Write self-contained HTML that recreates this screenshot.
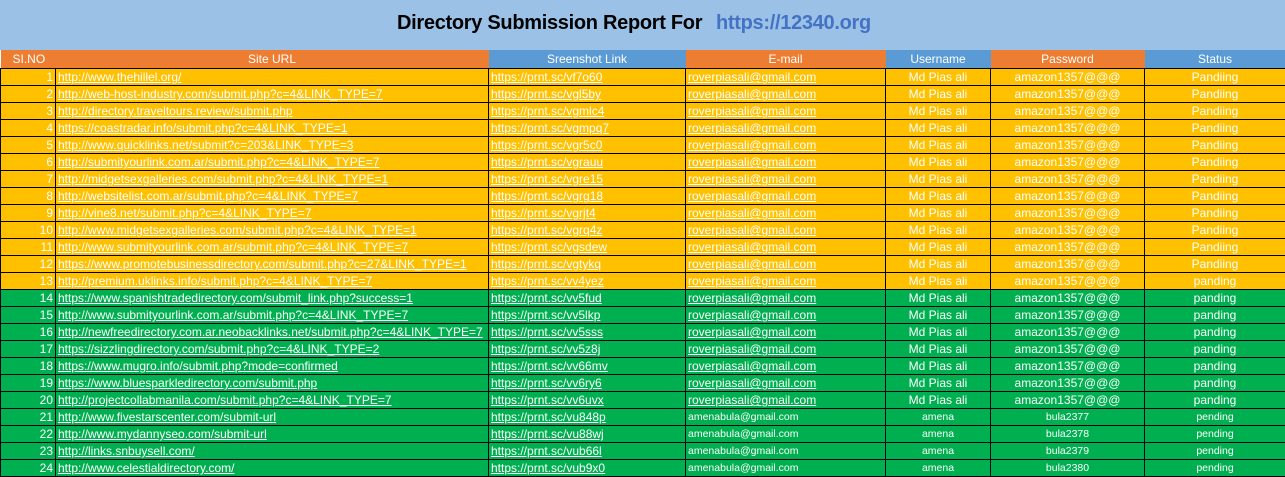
<!DOCTYPE html>
<html><head><meta charset="utf-8"><style>
body{margin:0;width:1285px;height:477px;overflow:hidden;background:#fff;font-family:"Liberation Sans",sans-serif}
.title{position:absolute;left:0;top:0;width:1285px;height:50px;background:#9bc2e6}
.title span{position:absolute;top:12px;font-weight:bold;font-size:20px;letter-spacing:-0.3px;white-space:nowrap}
table{position:absolute;left:0;top:50px;border-collapse:collapse;table-layout:fixed;width:1285px}
td{height:16px;padding:0 2px;font-size:12px;color:#fff;white-space:nowrap;overflow:hidden;border:1px solid #000;line-height:16px}
tr.h td{border:none;height:18px;text-align:center;font-size:12px;text-decoration:none!important}
.o{background:#ed7d31}.b{background:#5b9bd5}
tr.y td{background:#ffc000}tr.g td{background:#00b050}
td:nth-child(1){text-align:right}
td:nth-child(2),td:nth-child(3),tr.u td:nth-child(4){text-decoration:underline}
td:nth-child(5),td:nth-child(6),td:nth-child(7){text-align:center}
tr.a td:nth-child(4),tr.a td:nth-child(5),tr.a td:nth-child(6),tr.a td:nth-child(7){font-size:10.5px}
tr.h td:nth-child(1){text-align:left;padding-left:12px}
</style></head><body>
<div class="title"><span style="left:397px;color:#000">Directory Submission Report For</span><span style="left:716px;color:#4472c4">https://12340.org</span></div>
<table>
<colgroup><col style="width:55px"><col style="width:433px"><col style="width:197px"><col style="width:200px"><col style="width:105px"><col style="width:154px"><col style="width:141px"></colgroup>
<tr class="h"><td class="o">SI.NO</td><td class="o">Site URL</td><td class="b">Sreenshot Link</td><td class="o">E-mail</td><td class="b">Username</td><td class="o">Password</td><td class="b">Status</td></tr>
<tr class="y u"><td>1</td><td>http://www.thehillel.org/</td><td>https://prnt.sc/vf7o60</td><td>roverpiasali@gmail.com</td><td>Md Pias ali</td><td>amazon1357@@@</td><td>Pandiing</td></tr>
<tr class="y u"><td>2</td><td>http://web-host-industry.com/submit.php?c=4&amp;LINK_TYPE=7</td><td>https://prnt.sc/vgl5by</td><td>roverpiasali@gmail.com</td><td>Md Pias ali</td><td>amazon1357@@@</td><td>Pandiing</td></tr>
<tr class="y u"><td>3</td><td>http://directory.traveltours.review/submit.php</td><td>https://prnt.sc/vgmlc4</td><td>roverpiasali@gmail.com</td><td>Md Pias ali</td><td>amazon1357@@@</td><td>Pandiing</td></tr>
<tr class="y u"><td>4</td><td>https://coastradar.info/submit.php?c=4&amp;LINK_TYPE=1</td><td>https://prnt.sc/vgmpq7</td><td>roverpiasali@gmail.com</td><td>Md Pias ali</td><td>amazon1357@@@</td><td>Pandiing</td></tr>
<tr class="y u"><td>5</td><td>http://www.quicklinks.net/submit?c=203&amp;LINK_TYPE=3</td><td>https://prnt.sc/vgr5c0</td><td>roverpiasali@gmail.com</td><td>Md Pias ali</td><td>amazon1357@@@</td><td>Pandiing</td></tr>
<tr class="y u"><td>6</td><td>http://submityourlink.com.ar/submit.php?c=4&amp;LINK_TYPE=7</td><td>https://prnt.sc/vgrauu</td><td>roverpiasali@gmail.com</td><td>Md Pias ali</td><td>amazon1357@@@</td><td>Pandiing</td></tr>
<tr class="y u"><td>7</td><td>http://midgetsexgalleries.com/submit.php?c=4&amp;LINK_TYPE=1</td><td>https://prnt.sc/vgre15</td><td>roverpiasali@gmail.com</td><td>Md Pias ali</td><td>amazon1357@@@</td><td>Pandiing</td></tr>
<tr class="y u"><td>8</td><td>http://websitelist.com.ar/submit.php?c=4&amp;LINK_TYPE=7</td><td>https://prnt.sc/vgrg18</td><td>roverpiasali@gmail.com</td><td>Md Pias ali</td><td>amazon1357@@@</td><td>Pandiing</td></tr>
<tr class="y u"><td>9</td><td>http://vine8.net/submit.php?c=4&amp;LINK_TYPE=7</td><td>https://prnt.sc/vgrjt4</td><td>roverpiasali@gmail.com</td><td>Md Pias ali</td><td>amazon1357@@@</td><td>Pandiing</td></tr>
<tr class="y u"><td>10</td><td>http://www.midgetsexgalleries.com/submit.php?c=4&amp;LINK_TYPE=1</td><td>https://prnt.sc/vgrq4z</td><td>roverpiasali@gmail.com</td><td>Md Pias ali</td><td>amazon1357@@@</td><td>Pandiing</td></tr>
<tr class="y u"><td>11</td><td>http://www.submityourlink.com.ar/submit.php?c=4&amp;LINK_TYPE=7</td><td>https://prnt.sc/vgsdew</td><td>roverpiasali@gmail.com</td><td>Md Pias ali</td><td>amazon1357@@@</td><td>Pandiing</td></tr>
<tr class="y u"><td>12</td><td>https://www.promotebusinessdirectory.com/submit.php?c=27&amp;LINK_TYPE=1</td><td>https://prnt.sc/vgtykq</td><td>roverpiasali@gmail.com</td><td>Md Pias ali</td><td>amazon1357@@@</td><td>Pandiing</td></tr>
<tr class="y u"><td>13</td><td>http://premium.uklinks.info/submit.php?c=4&amp;LINK_TYPE=7</td><td>https://prnt.sc/vv4yez</td><td>roverpiasali@gmail.com</td><td>Md Pias ali</td><td>amazon1357@@@</td><td>panding</td></tr>
<tr class="g u"><td>14</td><td>https://www.spanishtradedirectory.com/submit_link.php?success=1</td><td>https://prnt.sc/vv5fud</td><td>roverpiasali@gmail.com</td><td>Md Pias ali</td><td>amazon1357@@@</td><td>panding</td></tr>
<tr class="g u"><td>15</td><td>http://www.submityourlink.com.ar/submit.php?c=4&amp;LINK_TYPE=7</td><td>https://prnt.sc/vv5lkp</td><td>roverpiasali@gmail.com</td><td>Md Pias ali</td><td>amazon1357@@@</td><td>panding</td></tr>
<tr class="g u"><td>16</td><td>http://newfreedirectory.com.ar.neobacklinks.net/submit.php?c=4&amp;LINK_TYPE=7</td><td>https://prnt.sc/vv5sss</td><td>roverpiasali@gmail.com</td><td>Md Pias ali</td><td>amazon1357@@@</td><td>panding</td></tr>
<tr class="g u"><td>17</td><td>https://sizzlingdirectory.com/submit.php?c=4&amp;LINK_TYPE=2</td><td>https://prnt.sc/vv5z8j</td><td>roverpiasali@gmail.com</td><td>Md Pias ali</td><td>amazon1357@@@</td><td>panding</td></tr>
<tr class="g u"><td>18</td><td>https://www.mugro.info/submit.php?mode=confirmed</td><td>https://prnt.sc/vv66mv</td><td>roverpiasali@gmail.com</td><td>Md Pias ali</td><td>amazon1357@@@</td><td>panding</td></tr>
<tr class="g u"><td>19</td><td>https://www.bluesparkledirectory.com/submit.php</td><td>https://prnt.sc/vv6ry6</td><td>roverpiasali@gmail.com</td><td>Md Pias ali</td><td>amazon1357@@@</td><td>panding</td></tr>
<tr class="g u"><td>20</td><td>http://projectcollabmanila.com/submit.php?c=4&amp;LINK_TYPE=7</td><td>https://prnt.sc/vv6uvx</td><td>roverpiasali@gmail.com</td><td>Md Pias ali</td><td>amazon1357@@@</td><td>panding</td></tr>
<tr class="g a"><td>21</td><td>http://www.fivestarscenter.com/submit-url</td><td>https://prnt.sc/vu848p</td><td>amenabula@gmail.com</td><td>amena</td><td>bula2377</td><td>pending</td></tr>
<tr class="g a"><td>22</td><td>http://www.mydannyseo.com/submit-url</td><td>https://prnt.sc/vu88wj</td><td>amenabula@gmail.com</td><td>amena</td><td>bula2378</td><td>pending</td></tr>
<tr class="g a"><td>23</td><td>http://links.snbuysell.com/</td><td>https://prnt.sc/vub66l</td><td>amenabula@gmail.com</td><td>amena</td><td>bula2379</td><td>pending</td></tr>
<tr class="g a"><td>24</td><td>http://www.celestialdirectory.com/</td><td>https://prnt.sc/vub9x0</td><td>amenabula@gmail.com</td><td>amena</td><td>bula2380</td><td>pending</td></tr>
</table>
</body></html>
